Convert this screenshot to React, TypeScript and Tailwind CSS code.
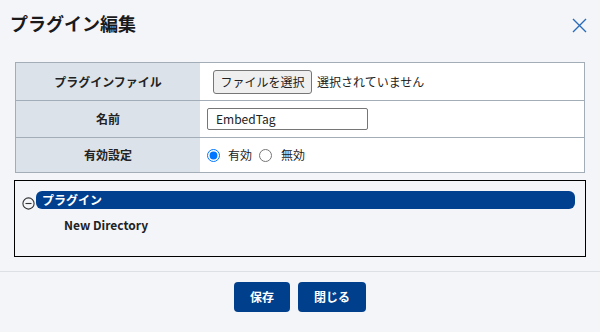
import React from "react";

const font = { fontFamily: '"Noto Sans CJK JP", "Noto Sans", sans-serif' };

export default function App() {
  return (
    <div
      className="w-[600px] h-[332px] bg-[#f4f5f9] flex flex-col text-[#222]"
      style={font}
    >
      {/* header */}
      <div className="h-[45px] flex items-center justify-between pl-[10px] pr-[13px] shrink-0">
        <h1 className="text-[18px] font-bold leading-none text-[#1a1a1a]">プラグイン編集</h1>
        <svg width="15" height="15" viewBox="0 0 15 15" className="mt-[6px]">
          <path d="M1 1 L14 14 M14 1 L1 14" stroke="#2b6cb8" strokeWidth="1.4" fill="none" />
        </svg>
      </div>

      {/* form table */}
      <div className="mx-[15px] mt-[17px] w-[570px] border border-[#a3adb8] flex flex-col text-[12px] shrink-0">
        <div className="flex h-[38px] border-b border-[#a3adb8]">
          <div className="w-[184px] bg-[#dce2e9] flex items-center justify-center font-bold">プラグインファイル</div>
          <div className="flex-1 bg-white flex items-center pl-[13px]">
            <div className="h-[24px] w-[99px] border border-[#767676] rounded-[3px] bg-[#efefef] flex items-center justify-center">
              ファイルを選択
            </div>
            <span className="ml-[5px]">選択されていません</span>
          </div>
        </div>
        <div className="flex h-[37px] border-b border-[#a3adb8]">
          <div className="w-[184px] bg-[#dce2e9] flex items-center justify-center font-bold">名前</div>
          <div className="flex-1 bg-white flex items-center pl-[7px]">
            <div className="h-[22px] w-[161px] border border-[#767676] rounded-[2px] bg-white flex items-center pl-[8px] text-[12px]">
              EmbedTag
            </div>
          </div>
        </div>
        <div className="flex h-[34px]">
          <div className="w-[184px] bg-[#dce2e9] flex items-center justify-center font-bold">有効設定</div>
          <div className="flex-1 bg-white flex items-center pl-[7px]">
            <label className="flex items-center">
              <input type="radio" name="en" defaultChecked className="m-0 w-[13px] h-[13px]" />
              <span className="ml-[8px]">有効</span>
            </label>
            <label className="flex items-center ml-[7px]">
              <input type="radio" name="en" className="m-0 w-[13px] h-[13px]" />
              <span className="ml-[9px]">無効</span>
            </label>
          </div>
        </div>
      </div>

      {/* tree */}
      <div className="ml-[14px] mt-[7px] w-[572px] h-[77px] border border-black pt-[10px] pr-[10px] shrink-0">
        <div className="flex items-end">
          <svg width="13" height="13" viewBox="0 0 13 13" className="ml-[7px] mb-[-1px] shrink-0">
            <circle cx="6.5" cy="6.5" r="5.6" stroke="#333" strokeWidth="1.1" fill="none" />
            <path d="M3.5 6.5 H9.5" stroke="#333" strokeWidth="1.1" />
          </svg>
          <div className="flex-1 h-[18px] bg-[#00408f] rounded-[6px] text-white font-bold text-[12px] flex items-center pl-[6px] ml-px">
            プラグイン
          </div>
        </div>
        <div className="pl-[49px] mt-[7px] text-[12px] font-bold text-[#222]">New Directory</div>
      </div>

      {/* footer */}
      <div className="mt-[14px] h-px bg-[#dde1e6] w-full shrink-0" />
      <div className="flex justify-center gap-[8px] mt-[10px]">
        <button className="w-[56px] h-[30px] rounded-[4px] bg-[#003f8c] text-white text-[12px] font-bold">保存</button>
        <button className="w-[68px] h-[30px] rounded-[4px] bg-[#003f8c] text-white text-[12px] font-bold">閉じる</button>
      </div>
    </div>
  );
}
